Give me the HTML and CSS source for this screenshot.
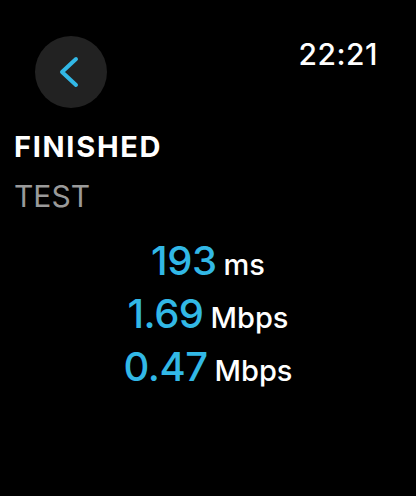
FILE: index.html
```html
<!DOCTYPE html>
<html lang="en">
<head>
    <meta charset="UTF-8">
    <meta name="viewport" content="width=device-width, initial-scale=1.0">
    <title>Finished Test</title>
    <link rel="stylesheet" href="styles.css">
</head>
<body>
    <div class="screen">
        <div class="top-bar">
            <button class="back-btn" type="button" aria-label="Back">
                <svg width="72" height="72" viewBox="0 0 72 72">
                    <path d="M41 23 L27 36 L41 49" fill="none" stroke="#32b8e6" stroke-width="4" stroke-linecap="round" stroke-linejoin="round"/>
                </svg>
            </button>
            <span class="clock">22:21</span>
        </div>

        <h1 class="title">FINISHED</h1>
        <p class="subtitle">TEST</p>

        <div class="results">
            <div class="result"><span class="value">193</span><span class="unit">ms</span></div>
            <div class="result"><span class="value">1.69</span><span class="unit">Mbps</span></div>
            <div class="result"><span class="value">0.47</span><span class="unit">Mbps</span></div>
        </div>
    </div>
</body>
</html>
```

FILE: styles.css
```css
/* General Reset */
* {
    margin: 0;
    padding: 0;
    box-sizing: border-box;
    font-family: 'Inter', 'Roboto', sans-serif;
}

body {
    background: #000;
    color: #fff;
}

.screen {
    width: 416px;
    height: 496px;
    padding: 36px 38px 0 14px;
}

.top-bar {
    display: flex;
    justify-content: space-between;
    align-items: flex-start;
    padding-left: 21px;
}

.back-btn {
    width: 72px;
    height: 72px;
    border: none;
    border-radius: 50%;
    background: #222;
    display: block;
    cursor: pointer;
}

.back-btn svg {
    display: block;
}

.clock {
    font-size: 30px;
    font-weight: 500;
    line-height: 36px;
    letter-spacing: 0.5px;
}

.title {
    margin-top: 22px;
    font-size: 29px;
    font-weight: 700;
    line-height: 34px;
    letter-spacing: 1.7px;
}

.subtitle {
    margin-top: 14px;
    font-size: 30px;
    font-weight: 400;
    line-height: 36px;
    color: #9a9a9a;
}

.results {
    margin-top: 20px;
    margin-right: -24px;
    text-align: center;
}

.result {
    font-size: 40px;
    line-height: 53px;
}

.value {
    font-weight: 500;
    color: #32b8e6;
    letter-spacing: -0.5px;
}

.unit {
    margin-left: 7px;
    font-size: 29px;
    font-weight: 500;
    line-height: 1;
}
```
